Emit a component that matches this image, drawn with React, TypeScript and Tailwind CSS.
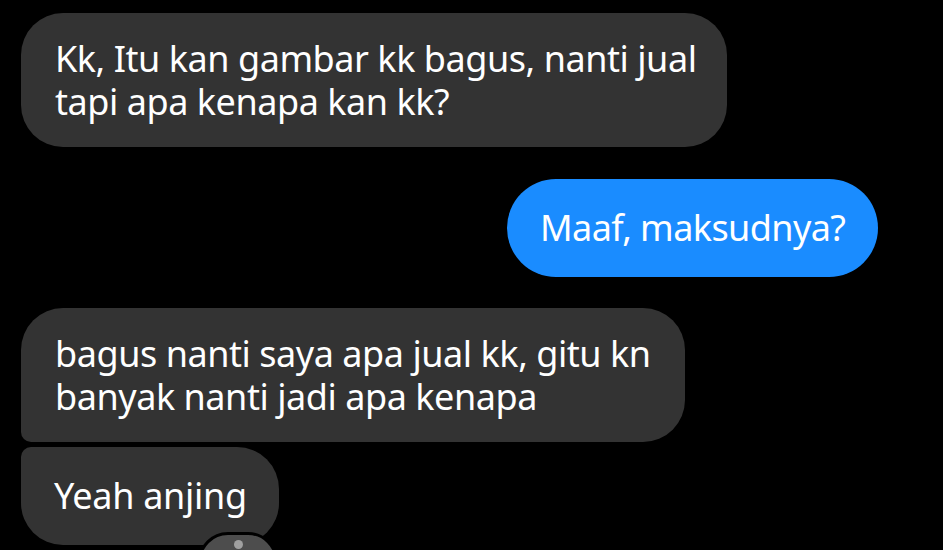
import React from "react";

export default function App() {
  const font = { fontFamily: '"Noto Sans", Roboto, sans-serif' };
  return (
    <div className="w-[943px] h-[550px] bg-black overflow-hidden" style={font}>
      <div className="relative flex flex-col items-start pl-[21px] pt-[13px] text-white text-[36px] leading-[43px]">
        <div className="w-[706px] h-[134px] bg-[#333333] rounded-[42px] pl-[34px] pt-[24px] tracking-[-0.45px]">
          Kk, Itu kan gambar kk bagus, nanti jual
          <br />
          tapi apa kenapa kan kk?
        </div>
        <div className="self-end mr-[65px] mt-[32px] w-[371px] h-[98px] bg-[#1a8cff] rounded-full pl-[33px] pt-[27px] tracking-[-0.6px]">
          Maaf, maksudnya?
        </div>
        <div className="mt-[31px] w-[664px] h-[134px] bg-[#333333] rounded-[42px] rounded-bl-[10px] pl-[34px] pt-[24px] tracking-[-0.45px]">
          bagus nanti saya apa jual kk, gitu kn
          <br />
          banyak nanti jadi apa kenapa
        </div>
        <div className="mt-[5px] w-[258px] h-[98px] bg-[#333333] rounded-[42px] rounded-tl-[10px] pl-[33px] pt-[27px] tracking-[-0.3px]">
          Yeah anjing
        </div>
        <div className="absolute left-[198px] top-[532px] w-[80px] h-[60px] rounded-full bg-[#4d4d4d] border-[3px] border-black flex justify-center pt-[5px]">
          <div className="w-[9px] h-[9px] rounded-full bg-[#a0a0a0]" />
        </div>
      </div>
    </div>
  );
}
